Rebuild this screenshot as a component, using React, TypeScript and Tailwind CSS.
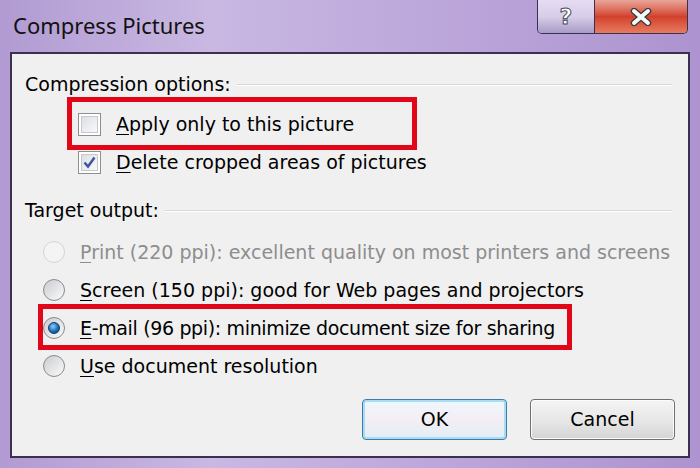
import React from 'react';

const body = { fontFamily: '"DejaVu Sans", sans-serif' };

function U({ children }: { children: React.ReactNode }) {
  return <span className="underline underline-offset-[3px] decoration-1">{children}</span>;
}

function Checkbox({ checked }: { checked?: boolean }) {
  return (
    <div className="w-[23px] h-[23px] border border-[#8f8f8f] bg-white p-[2px]">
      <div className="w-full h-full border border-[#c4c8cf] bg-gradient-to-br from-[#dcdfe4] to-[#f9f9fa] flex items-center justify-center">
        {checked && (
          <svg width="13" height="13" viewBox="0 0 13 13">
            <path d="M1.5 6.5 L5 10.5 L11.5 1.5" fill="none" stroke="#3d55a0" strokeWidth="2.4" />
          </svg>
        )}
      </div>
    </div>
  );
}

function Radio({ checked, disabled }: { checked?: boolean; disabled?: boolean }) {
  return (
    <div
      className={
        'w-[22px] h-[22px] rounded-full border flex items-center justify-center ' +
        (disabled
          ? 'border-[#d4d4d4] bg-[#f4f4f4]'
          : 'border-[#8a8a8a] bg-gradient-to-br from-[#c9ccd0] to-[#fbfbfb]')
      }
    >
      {checked && (
        <div className="w-[12px] h-[12px] rounded-full bg-[radial-gradient(circle_at_40%_35%,#8ed0f5,#1a6db8_55%,#0d3c78)] border border-[#123a6b]" />
      )}
    </div>
  );
}

function Header({ label }: { label: string }) {
  return (
    <div className="h-[38px] flex items-center pl-[13px] pr-[16px] gap-[6px]">
      <span className="text-[19px] text-black whitespace-nowrap">{label}</span>
      <div className="flex-1 flex flex-col mt-[2px]">
        <div className="h-px bg-[#d5d9de]" />
        <div className="h-px bg-white" />
      </div>
    </div>
  );
}

export default function App() {
  return (
    <div className="w-[700px] h-[468px] flex flex-col bg-[linear-gradient(90deg,#b19bd2_0%,#c9b8e2_30%,#bda8db_60%,#ad93cf_100%)] overflow-hidden">
      {/* title bar */}
      <div className="h-[52px] flex items-start justify-between">
        <span
          className="mt-[9px] ml-[13px] text-[22px] text-[#111]"
          style={{ fontFamily: '"Noto Sans", "Open Sans", sans-serif' }}
        >
          Compress Pictures
        </span>
        <div className="flex mr-[12px] border border-t-0 border-[#3a3150] rounded-b-[5px] overflow-hidden h-[34px]">
          <div className="w-[57px] flex items-center justify-center bg-gradient-to-b from-[#e6dcf2] via-[#d8cde9] to-[#a89cc4] border-r border-[#3a3150]">
            <span className="text-[22px] font-bold text-white [-webkit-text-stroke:1px_#4a4a5a]" style={{ fontFamily: '"DejaVu Sans", sans-serif' }}>?</span>
          </div>
          <div className="w-[92px] flex items-center justify-center bg-gradient-to-b from-[#e8a59a] via-[#d2402c] to-[#e77a5f]">
            <svg width="24" height="18" viewBox="0 0 24 18">
              <path d="M5 3 L19 15 M19 3 L5 15" stroke="#3a3a3a" strokeWidth="6.5" strokeLinecap="round" />
              <path d="M5 3 L19 15 M19 3 L5 15" stroke="#f4fbf6" strokeWidth="4" strokeLinecap="round" />
            </svg>
          </div>
        </div>
      </div>

      {/* panel */}
      <div className="relative flex-1 mx-[10px] mb-[10px] border-2 border-[#3a3150] bg-[#f0f0f0] flex flex-col pt-[11px]" style={body}>
        <Header label="Compression options:" />
        <div className="h-[38px] flex items-center pl-[66px] gap-[15px] mt-[2px]">
          <Checkbox />
          <span className="text-[19px] text-black"><U>A</U>pply only to this picture</span>
        </div>
        <div className="h-[38px] flex items-center pl-[66px] gap-[15px]">
          <Checkbox checked />
          <span className="text-[19px] text-black"><U>D</U>elete cropped areas of pictures</span>
        </div>
        <div className="h-[10px]" />
        <Header label="Target output:" />
        <div className="h-[4px]" />
        <div className="h-[38px] flex items-center pl-[31px] gap-[15px]">
          <Radio disabled />
          <span className="text-[19px] text-[#8d8d8d]"><U>P</U>rint (220 ppi): excellent quality on most printers and screens</span>
        </div>
        <div className="h-[38px] flex items-center pl-[31px] gap-[15px]">
          <Radio />
          <span className="text-[19px] text-black"><U>S</U>creen (150 ppi): good for Web pages and projectors</span>
        </div>
        <div className="h-[38px] flex items-center pl-[31px] gap-[15px]">
          <Radio checked />
          <span className="text-[19px] text-black tracking-[-0.35px]"><U>E</U>-mail (96 ppi): minimize document size for sharing</span>
        </div>
        <div className="h-[38px] flex items-center pl-[31px] gap-[15px]">
          <Radio />
          <span className="text-[19px] text-black"><U>U</U>se document resolution</span>
        </div>

        <div className="flex justify-end gap-[23px] pr-[13px] mt-[14px]">
          <button className="w-[145px] h-[41px] rounded-[4px] border border-[#3d7bad] bg-gradient-to-b from-[#eef8fd] via-[#f3eef4] to-[#e2eef5] shadow-[inset_0_0_0_2px_#a9dcf3] text-[19px] text-black">
            OK
          </button>
          <button className="w-[145px] h-[41px] rounded-[4px] border border-[#707070] bg-gradient-to-b from-[#f4f4f4] via-[#e8e8e8] to-[#d4d4d4] shadow-[inset_0_0_0_1px_#fbfbfb] text-[19px] text-black">
            Cancel
          </button>
        </div>

        {/* red annotation boxes */}
        <div className="absolute left-[55px] top-[43px] w-[350px] h-[53px] border-[5px] border-[#e10718]" />
        <div className="absolute left-[26px] top-[250px] w-[534px] h-[46px] border-[5px] border-[#e10718]" />
      </div>
    </div>
  );
}
